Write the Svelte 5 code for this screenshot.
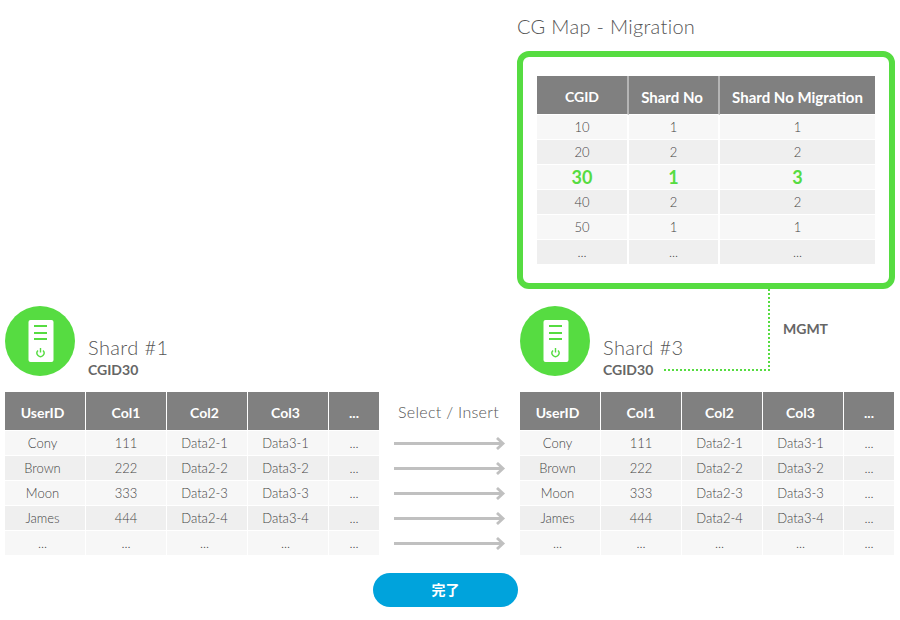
<script>
  const mapRows = [
    ['10', '1', '1'],
    ['20', '2', '2'],
    ['30', '1', '3'],
    ['40', '2', '2'],
    ['50', '1', '1'],
    ['...', '...', '...']
  ];
  const cols = ['UserID', 'Col1', 'Col2', 'Col3', '...'];
  const rows = [
    ['Cony', '111', 'Data2-1', 'Data3-1', '...'],
    ['Brown', '222', 'Data2-2', 'Data3-2', '...'],
    ['Moon', '333', 'Data2-3', 'Data3-3', '...'],
    ['James', '444', 'Data2-4', 'Data3-4', '...'],
    ['...', '...', '...', '...', '...']
  ];
  const shards = ['Shard #1', 'Shard #3'];
</script>

{#snippet shard(name)}
  <section class="shard">
    <div class="shard-head">
      <svg class="server" width="70" height="70" viewBox="0 0 70 70">
        <circle cx="35" cy="35" r="35" fill="#56dc41" />
        <rect x="23.500" y="14" width="25" height="42" rx="2" fill="#fff" />
        <path d="M29 20h13M29 27h13M29 33h13" stroke="#56dc41" stroke-width="2" fill="none" />
        <path d="M33 44.500a3.500 3.500 0 1 0 5 0M35.500 42v4.500" stroke="#56dc41" stroke-width="1.400" fill="none" />
      </svg>
      <div class="shard-name">
        <h2>{name}</h2>
        <strong>CGID30</strong>
      </div>
    </div>
    <table class="data">
      <thead>
        <tr>{#each cols as c}<th>{c}</th>{/each}</tr>
      </thead>
      <tbody>
        {#each rows as r}
          <tr>{#each r as v}<td>{v}</td>{/each}</tr>
        {/each}
      </tbody>
    </table>
  </section>
{/snippet}

<div class="page">
  <section class="map">
    <h1>CG Map - Migration</h1>
    <div class="map-box">
      <table class="map-table">
        <thead>
          <tr><th>CGID</th><th>Shard No</th><th>Shard No Migration</th></tr>
        </thead>
        <tbody>
          {#each mapRows as r}
            <tr class:active={r[0] === '30'}>{#each r as v}<td>{v}</td>{/each}</tr>
          {/each}
        </tbody>
      </table>
    </div>
  </section>

  <div class="shards">
    {@render shard(shards[0])}
    <div class="transfer">
      <div class="transfer-label">Select / Insert</div>
      {#each rows as _}
        <div class="arrow">
          <svg width="112" height="13" viewBox="0 0 112 13">
            <path d="M0 6.500h109M103 1l6 5.500-6 5.500" stroke="#c0c0c0" stroke-width="2.800" fill="none" />
          </svg>
        </div>
      {/each}
    </div>
    {@render shard(shards[1])}

    <svg class="link" width="108" height="83" viewBox="0 0 108 83">
      <path d="M106 0v81H0" stroke="#56dc41" stroke-width="2" stroke-dasharray="2 2" fill="none" />
    </svg>
    <span class="mgmt">MGMT</span>
  </div>

  <div class="actions">
    <button type="button">完了</button>
  </div>
</div>

<style>
  :global(body) {
    margin: 0;
    background: #fff;
  }

  .page {
    width: 900px;
    height: 620px;
    box-sizing: border-box;
    padding: 13px 5px 0;
    font-family: Lato, "Noto Sans CJK JP", sans-serif;
    color: #666;
  }

  .map {
    width: 378px;
    margin-left: 512px;
  }

  h1 {
    margin: 0 0 12px;
    font-size: 20px;
    line-height: 26px;
    font-weight: 300;
    letter-spacing: 0.3px;
    color: #555;
  }

  .map-box {
    box-sizing: border-box;
    height: 238px;
    padding: 19px 14px 19px;
    border: 6px solid #56dc41;
    border-radius: 12px;
  }

  table {
    border-collapse: separate;
    border-spacing: 0;
    table-layout: fixed;
    width: 100%;
  }

  th {
    height: 35px;
    padding: 3px 0 0;
    box-sizing: content-box;
    background: #808080;
    color: #fff;
    font-size: 14px;
    font-weight: 700;
    border-right: 1px solid #fff;
    border-bottom: 1px solid #fff;
  }

  td {
    height: 24px;
    padding: 0;
    text-align: center;
    font-size: 13px;
    font-weight: 300;
    color: #444;
    background: #f7f7f7;
    border-right: 1px solid #fff;
    border-bottom: 1px solid #fff;
  }

  th:last-child,
  td:last-child {
    border-right: 0;
  }

  tbody tr:nth-child(even) td {
    background: #efefef;
  }

  .map-table th {
    border-right: 2px solid #b5b5b5;
  }

  .map-table th:nth-child(n+2) {
    font-size: 15px;
  }

  .map-table td {
    border-right-width: 2px;
  }

  .map-table th:last-child,
  .map-table td:last-child {
    border-right: 0;
  }

  .map-table th:nth-child(1) { width: 90px; }
  .map-table th:nth-child(2) { width: 86px; padding-right: 3px; }

  .data th:nth-child(-n+4) { width: 80px; }

  .data th:nth-child(1),
  .data th:nth-child(3),
  .data th:nth-child(4),
  .data td:nth-child(1),
  .data td:nth-child(3),
  .data td:nth-child(4) {
    padding-right: 5px;
  }

  .data th:nth-child(1),
  .data th:nth-child(3),
  .data th:nth-child(4) {
    width: 75px;
  }

  .map-table .active td {
    color: #56dc41;
    font-size: 18px;
    line-height: 20px;
    font-weight: 700;
    vertical-align: top;
    padding-top: 2px;
    height: 22px;
  }

  .shards {
    position: relative;
    display: flex;
    margin-top: 17px;
  }

  .shard {
    width: 374px;
    flex: none;
  }

  .shard-head {
    display: flex;
    align-items: flex-end;
    gap: 13px;
    height: 70px;
    margin-bottom: 16px;
  }

  .server {
    display: block;
  }

  .shard-name h2 {
    margin: 0 0 5px;
    font-size: 20px;
    line-height: 24px;
    font-weight: 300;
    letter-spacing: 0.4px;
    color: #555;
  }

  .shard-name strong {
    display: block;
    font-size: 14px;
    line-height: 12px;
    color: #666;
  }

  .transfer {
    width: 141px;
    flex: none;
    padding-top: 86px;
  }

  .transfer-label {
    height: 39px;
    box-sizing: border-box;
    padding: 7px 2px 0 0;
    text-align: center;
    font-size: 16px;
    font-weight: 300;
    letter-spacing: 0.3px;
    line-height: 26px;
    color: #555;
  }

  .arrow {
    height: 25px;
    display: flex;
    align-items: center;
    padding-left: 15px;
  }

  .arrow svg {
    display: block;
  }

  .link {
    position: absolute;
    left: 658px;
    top: -17px;
  }

  .mgmt {
    position: absolute;
    left: 778px;
    top: 14px;
    font-size: 14px;
    font-weight: 700;
    color: #666;
  }

  .actions {
    display: flex;
    justify-content: center;
    margin-top: 17px;
    padding-right: 9px;
  }

  button {
    width: 145px;
    height: 34px;
    padding: 0 0 2px;
    border: 0;
    border-radius: 17px;
    background: #00a3dc;
    color: #fff;
    font-family: "Noto Sans CJK JP", sans-serif;
    font-size: 14px;
    font-weight: 700;
  }
</style>
